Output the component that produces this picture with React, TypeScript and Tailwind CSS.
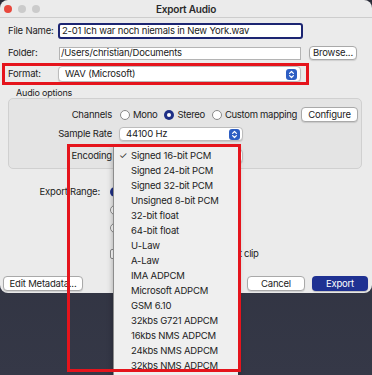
import type { ReactNode } from "react";

const ENCODINGS = [
  "Signed 16-bit PCM",
  "Signed 24-bit PCM",
  "Signed 32-bit PCM",
  "Unsigned 8-bit PCM",
  "32-bit float",
  "64-bit float",
  "U-Law",
  "A-Law",
  "IMA ADPCM",
  "Microsoft ADPCM",
  "GSM 6.10",
  "32kbs G721 ADPCM",
  "16kbs NMS ADPCM",
  "24kbs NMS ADPCM",
  "32kbs NMS ADPCM",
];

function Stepper() {
  return (
    <span className="flex h-[11px] w-[11px] items-center justify-center rounded-[3px] bg-[#2d5ec3]">
      <svg width="7" height="9" viewBox="0 0 7 9" fill="none" stroke="white" strokeWidth="1.2" strokeLinecap="round" strokeLinejoin="round">
        <path d="M1.6 3.4 L3.5 1.5 L5.4 3.4" />
        <path d="M1.6 5.6 L3.5 7.5 L5.4 5.6" />
      </svg>
    </span>
  );
}

function Select({ value, className }: { value?: string; className: string }) {
  return (
    <div
      className={`flex items-center justify-between rounded-[4px] border border-[#bcbcbc] bg-white pl-[6px] pr-[2px] shadow-[0_1px_1px_rgba(0,0,0,0.12)] ${className}`}
    >
      <span>{value}</span>
      <Stepper />
    </div>
  );
}

function Btn({ children, className }: { children: ReactNode; className: string }) {
  return (
    <div
      className={`flex items-center justify-center rounded-[4px] border border-[#a9a9a9] bg-white shadow-[0_1px_1px_rgba(0,0,0,0.12)] ${className}`}
    >
      {children}
    </div>
  );
}

function Radio({ on }: { on?: boolean }) {
  return on ? (
    <span className="flex h-[10px] w-[10px] shrink-0 items-center justify-center rounded-full bg-[#1e2f86]">
      <span className="block h-[4px] w-[4px] rounded-full bg-white" />
    </span>
  ) : (
    <span className="block h-[10px] w-[10px] shrink-0 rounded-full border border-[#8a8a8a] bg-white" />
  );
}

export default function App() {
  return (
    <div className="relative h-[375px] w-[372px] overflow-hidden whitespace-nowrap bg-gradient-to-b from-[#2a2c38] to-[#353847] font-['Inter',sans-serif] text-[9.5px] leading-none tracking-[-0.2px] text-[#222]">
      {/* dialog */}
      <div className="flex h-[293px] flex-col rounded-[8px] bg-[#ebebeb]">
        <div className="grid h-[18px] grid-cols-[1fr_auto_1fr] items-center border-b border-[#cdcdcd]">
          <div className="flex gap-[6px] pl-[4px]">
            <span className="h-[8px] w-[8px] rounded-full bg-[#e8483d]" />
            <span className="h-[8px] w-[8px] rounded-full bg-[#cbcbcb]" />
            <span className="h-[8px] w-[8px] rounded-full bg-[#cbcbcb]" />
          </div>
          <div className="text-[10px] font-semibold text-[#2a2a2a]">Export Audio</div>
          <div />
        </div>

        <div className="mt-[5px] flex h-[16px] items-center pl-[8px]">
          <span className="w-[50px]">File Name:</span>
          <div className="flex h-[16px] w-[245px] items-center rounded-[3px] border-2 border-[#1c2572] bg-white pl-[2px]">
            2-01 Ich war noch niemals in New York.wav
          </div>
        </div>

        <div className="mt-[7px] flex h-[14px] items-center pl-[8px]">
          <span className="w-[51px]">Folder:</span>
          <div className="flex h-[13px] w-[242px] items-center border border-[#b4b4b4] bg-white pl-[1px]">
            /Users/christian/Documents
          </div>
          <Btn className="ml-[8px] h-[14px] w-[48px]">Browse...</Btn>
        </div>

        <div className="mt-[6px] flex h-[16px] items-center pl-[8px]">
          <span className="w-[50px]">Format:</span>
          <Select value="WAV (Microsoft)" className="h-[16px] w-[243px] pr-[3px]" />
        </div>

        <div className="mt-[6px] h-[10px] pl-[16px] text-[9px] leading-[10px]">Audio options</div>

        <div className="ml-[8px] flex h-[71px] w-[354px] flex-col rounded-[5px] border border-[#d0d0d0] bg-[#e4e4e4] pt-[8px]">
          <div className="flex h-[15px] items-center">
            <span className="w-[103px] text-right">Channels</span>
            <span className="ml-[8px]">
              <Radio />
            </span>
            <span className="ml-[3px] tracking-[-0.3px]">Mono</span>
            <span className="ml-[7px]">
              <Radio on />
            </span>
            <span className="ml-[3px] tracking-[-0.3px]">Stereo</span>
            <span className="ml-[7px]">
              <Radio />
            </span>
            <span className="ml-[3px] tracking-[-0.3px]">Custom mapping</span>
            <Btn className="ml-auto mr-[3px] h-[15px] w-[57px]">Configure</Btn>
          </div>
          <div className="mt-[5px] flex h-[14px] items-center">
            <span className="w-[103px] text-right">Sample Rate</span>
            <Select value="44100 Hz" className="ml-[7px] h-[14px] w-[124px]" />
          </div>
          <div className="mt-[8px] flex h-[14px] items-center">
            <span className="w-[103px] text-right">Encoding</span>
            <Select className="ml-[7px] h-[14px] w-[124px]" />
          </div>
        </div>

        {/* export range: options sit under the open menu, only their left edges show */}
        <div className="mt-[17px] flex pl-[8px]">
          <span className="h-[12px] w-[92px] text-right leading-[12px]">Export Range:</span>
          <div className="ml-[10px] flex flex-col">
            <div className="flex h-[12px] items-center">
              <Radio on />
            </div>
            <div className="mt-[6px] flex h-[12px] items-center">
              <Radio />
            </div>
            <div className="mt-[6px] flex h-[12px] items-center">
              <Radio />
            </div>
            <div className="mt-[14px] flex h-[12px] items-center gap-[3px]">
              <span className="block h-[10px] w-[10px] rounded-[2px] border border-[#8a8a8a] bg-white" />
              <span className="tracking-[-0.35px]">Trim blank space before first clip</span>
            </div>
          </div>
        </div>

        <div className="mt-auto flex h-[15px] items-center pl-[3px] pr-[4px]">
          <Btn className="h-[15px] w-[80px]">Edit Metadata...</Btn>
          <Btn className="ml-auto h-[15px] w-[58px]">Cancel</Btn>
          <div className="ml-[7px] flex h-[15px] w-[56px] items-center justify-center rounded-[4px] bg-[#1f3192] text-white shadow-[0_1px_1px_rgba(0,0,0,0.2)]">
            Export
          </div>
        </div>
        <div className="h-[2px]" />
      </div>

      {/* open encoding menu */}
      <div className="absolute left-[113px] top-[146px] h-[240px] w-[125px] border-l border-[#8c8c8c] bg-[#efefef] pt-[2px] shadow-[0_2px_6px_rgba(0,0,0,0.3)]">
        {ENCODINGS.map((e, i) => (
          <div key={e} className="flex h-[15px] items-center pl-[5px]">
            <span className="w-[12px]">{i === 0 ? "✓" : ""}</span>
            <span>{e}</span>
          </div>
        ))}
      </div>

      {/* red annotation boxes */}
      <div className="absolute left-[2px] top-[63px] h-[22px] w-[307px] border-[3px] border-[#e5141c]" />
      <div className="absolute left-[67px] top-[144px] h-[228px] w-[174px] border-[3px] border-[#e5141c]" />
    </div>
  );
}
